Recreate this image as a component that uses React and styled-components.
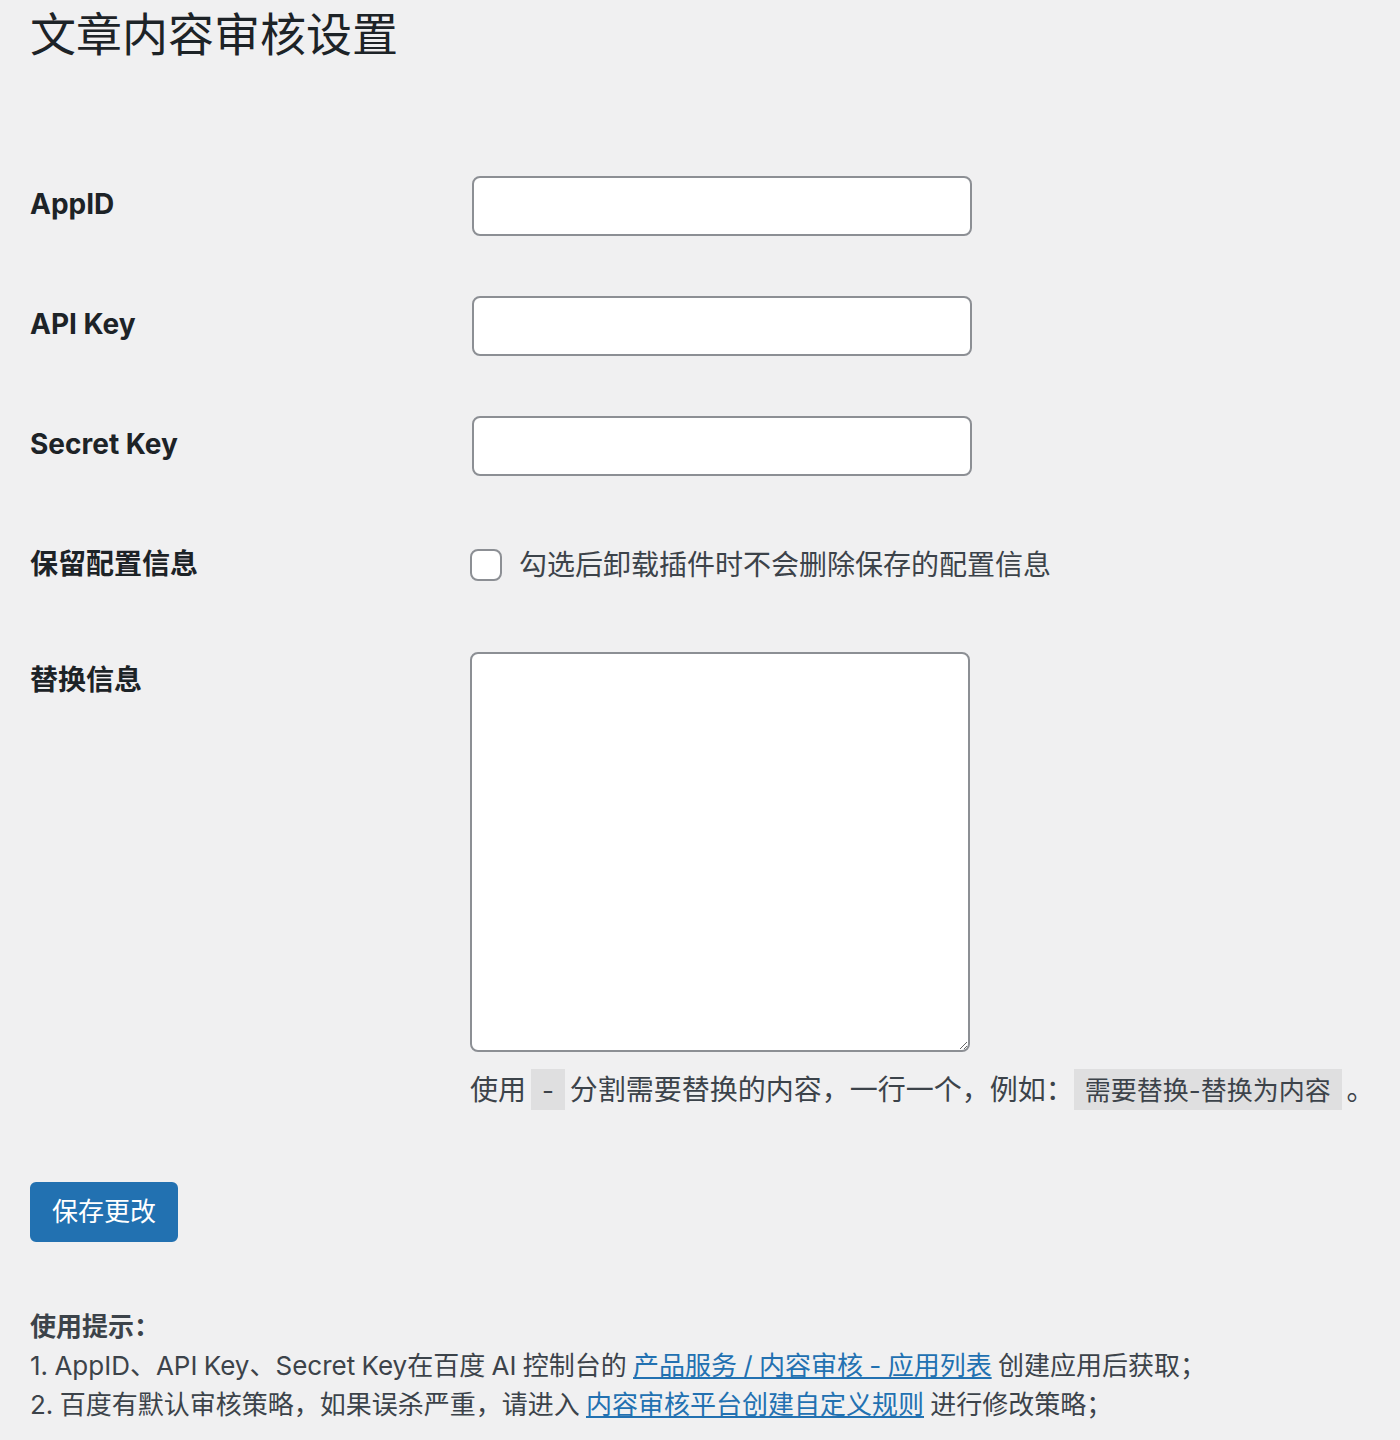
import React from "react";
import styled, { createGlobalStyle } from "styled-components";

const Global = createGlobalStyle`
  html, body { margin: 0; padding: 0; background: #f0f0f1; }
  body {
    font-family: Inter, "Noto Sans CJK SC", sans-serif;
    color: #3c434a;
    font-size: 26px;
  }
  * { box-sizing: border-box; }
`;

const Wrap = styled.div`
  padding: 4px 30px 40px 30px;
  min-height: 1440px;
`;

const Title = styled.h1`
  margin: 0;
  font-size: 46px;
  line-height: 60px;
  font-weight: 400;
  color: #1d2327;
`;

const Form = styled.form`
  margin-top: 82px;
`;

const Row = styled.div`
  display: grid;
  grid-template-columns: 440px 1fr;
`;

const Label = styled.label`
  padding: 40px 0;
  font-size: 28px;
  line-height: 36px;
  font-weight: 700;
  color: #1d2327;
`;

const Cell = styled.div`
  padding: 30px 0;
  font-size: 28px;
  color: #3c434a;
`;

const TextInput = styled.input`
  display: block;
  width: 500px;
  height: 60px;
  margin: 0 2px;
  border: 2px solid #8c8f94;
  border-radius: 8px;
  background: #fff;
  font-size: 28px;
  padding: 0 16px;
  outline: none;
`;

const CheckLine = styled.label`
  display: flex;
  align-items: center;
  gap: 17px;
  min-height: 56px;
  padding-top: 2px;
  font-size: 28px;
  line-height: 40px;
  color: #3c434a;
`;

const Check = styled.input`
  appearance: none;
  -webkit-appearance: none;
  margin: 0;
  width: 32px;
  height: 32px;
  border: 2px solid #8c8f94;
  border-radius: 8px;
  background: #fff;
  flex: none;
`;

const Area = styled.textarea`
  display: block;
  width: 500px;
  height: 400px;
  margin: 0;
  border: 2px solid #8c8f94;
  border-radius: 8px;
  background: #fff;
  font-size: 28px;
  padding: 8px 16px;
  outline: none;
  resize: both;
`;

const Description = styled.p`
  margin: 18px 0 0;
  font-size: 28px;
  line-height: 40px;
  color: #3c434a;
  white-space: nowrap;
  word-spacing: -3px;
`;

const Code = styled.code`
  font-family: Inter, "Noto Sans CJK SC", sans-serif;
  font-size: 26px;
  background: rgba(0, 0, 0, 0.07);
  padding: 6px 11px 4px;
  color: #3c434a;
  word-spacing: 0;
`;

const Submit = styled.div`
  margin-top: 41px;
`;

const Button = styled.button`
  height: 60px;
  padding: 0 20px;
  background: #2271b1;
  border: 2px solid #2271b1;
  border-radius: 6px;
  color: #fff;
  font-family: Inter, "Noto Sans CJK SC", sans-serif;
  font-size: 26px;
  line-height: 56px;
  cursor: pointer;
`;

const Tips = styled.div`
  margin-top: 65px;
  font-size: 26px;
  line-height: 39px;
  color: #3c434a;
`;

const TipTitle = styled.div`
  font-weight: 700;
`;

const TipLine = styled.div`
  word-spacing: -1px;
`;

const Link = styled.a`
  color: #2271b1;
  text-decoration: underline;
`;

const fields = [
  { label: "AppID" },
  { label: "API Key" },
  { label: "Secret Key" },
];

export default function App() {
  return (
    <>
      <Global />
      <Wrap>
        <Title>文章内容审核设置</Title>
        <Form onSubmit={(e) => e.preventDefault()}>
          {fields.map((f) => (
            <Row key={f.label}>
              <Label>{f.label}</Label>
              <Cell>
                <TextInput type="text" />
              </Cell>
            </Row>
          ))}
          <Row>
            <Label>保留配置信息</Label>
            <Cell>
              <CheckLine>
                <Check type="checkbox" />
                勾选后卸载插件时不会删除保存的配置信息
              </CheckLine>
            </Cell>
          </Row>
          <Row>
            <Label>替换信息</Label>
            <Cell>
              <Area />
              <Description>
                使用 <Code>-</Code> 分割需要替换的内容，一行一个，例如：
                <Code>需要替换-替换为内容</Code> 。
              </Description>
            </Cell>
          </Row>
          <Submit>
            <Button type="submit">保存更改</Button>
          </Submit>
        </Form>
        <Tips>
          <TipTitle>使用提示：</TipTitle>
          <TipLine>
            1. AppID、API Key、Secret Key在百度 AI 控制台的{" "}
            <Link href="#">产品服务 / 内容审核 - 应用列表</Link> 创建应用后获取；
          </TipLine>
          <TipLine>
            2. 百度有默认审核策略，如果误杀严重，请进入{" "}
            <Link href="#">内容审核平台创建自定义规则</Link> 进行修改策略；
          </TipLine>
        </Tips>
      </Wrap>
    </>
  );
}
